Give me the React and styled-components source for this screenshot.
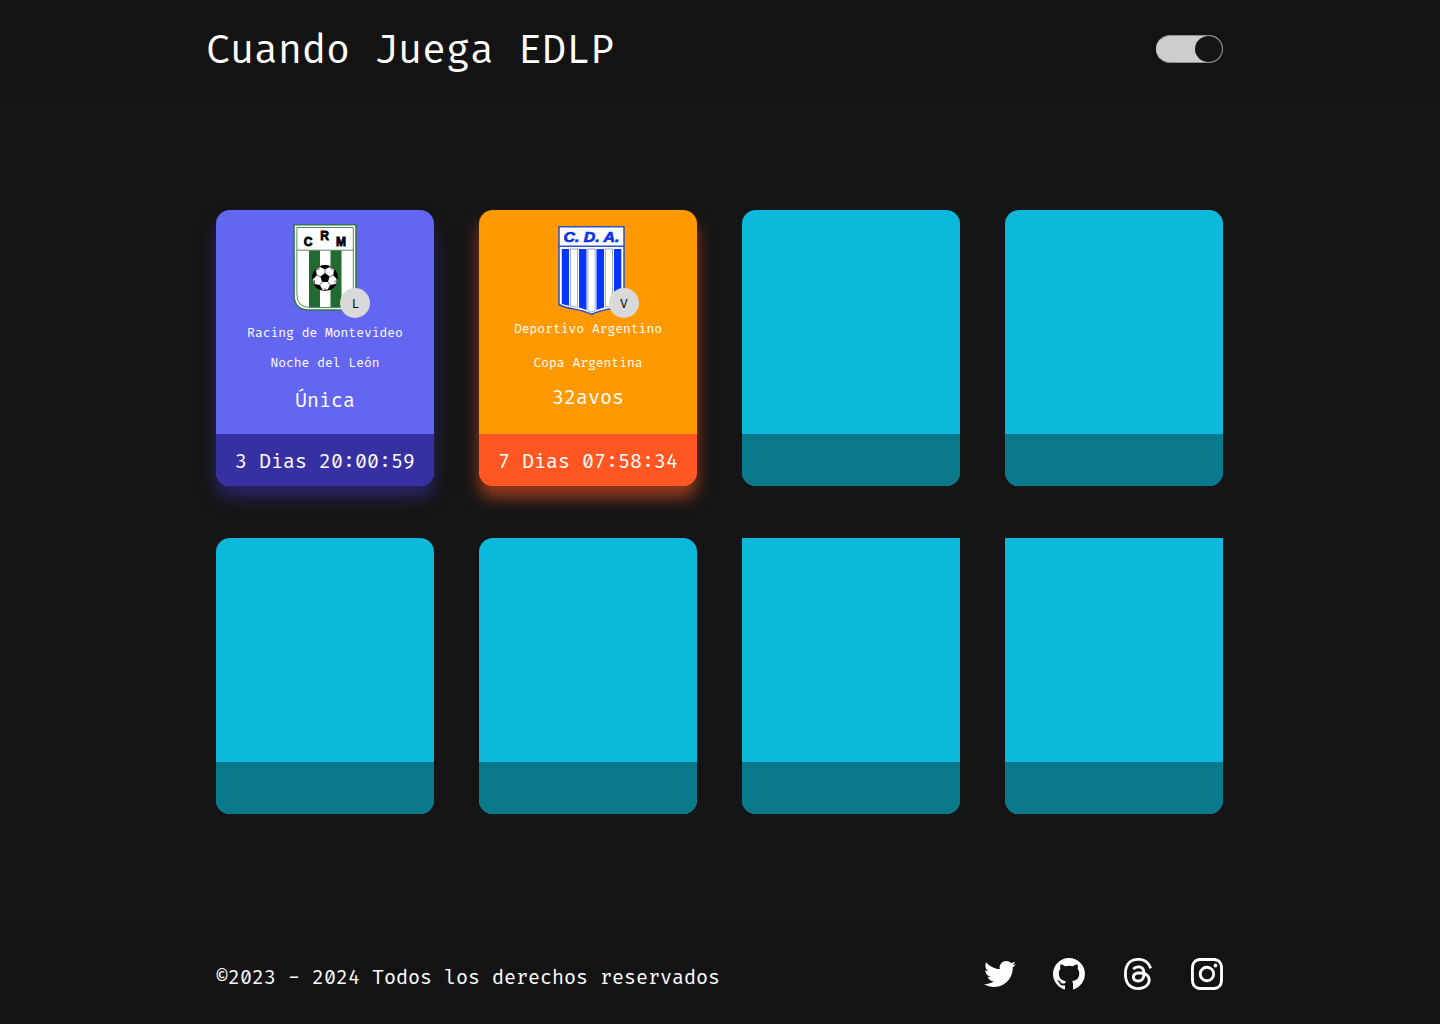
import React from "react";
import styled, { createGlobalStyle } from "styled-components";
import { BsGithub, BsThreads, BsInstagram } from "react-icons/bs";
import { FaTwitter } from "react-icons/fa";

const GlobalStyle = createGlobalStyle`
  *, *::before, *::after { box-sizing: border-box; }
  body {
    margin: 0;
    background: #151515;
    color: #fff;
    font-family: "Fira Code", "DejaVu Sans Mono", "Liberation Mono", monospace;
  }
`;

const Page = styled.div`
  min-height: 1024px;
  display: flex;
  flex-direction: column;
`;

const Bar = styled.header`
  height: 100px;
  padding: 0 217px 0 ${(p) => p.$left}px;
  background: #131313;
  display: flex;
  justify-content: space-between;
`;

const Title = styled.h1`
  margin: 27px 0 0;
  font-size: 39px;
  line-height: 48px;
  font-weight: 400;
  white-space: nowrap;
`;

const Toggle = styled.button`
  width: 67px;
  height: 28px;
  margin-top: 35px;
  padding: 0;
  border: 1px solid #909090;
  border-left-color: #cdcdcd;
  border-radius: 14px;
  background: #cdcdcd;
  display: flex;
  justify-content: flex-end;
`;

const Knob = styled.span`
  width: 27px;
  height: 26px;
  border-radius: 50%;
  background: #151515;
`;

const Main = styled.main`
  flex: 1;
  padding: 110px 217px 110px 216px;
`;

const Grid = styled.section`
  display: grid;
  grid-template-columns: repeat(4, 218px);
  grid-auto-rows: 276px;
  gap: 52px 45px;
`;

const Card = styled.article`
  display: flex;
  flex-direction: column;
  overflow: hidden;
  border-radius: ${(p) => (p.$square ? "0 0 14px 14px" : "14px")};
  background: ${(p) => p.$color};
  box-shadow: ${(p) => (p.$glow ? `0 12px 16px ${p.$glow}` : "none")};
`;

const Body = styled.div`
  height: 224px;
  display: flex;
  flex-direction: column;
  align-items: center;
`;

const Crest = styled.div`
  position: relative;
  width: 66px;
  height: 92px;
  margin: 14px ${(p) => p.$nudge}px 0 0;

  svg { display: block; }
`;

const Venue = styled.span`
  position: absolute;
  top: 64px;
  left: ${(p) => p.$left}px;
  width: 30px;
  height: 30px;
  border-radius: 50%;
  background: #d9d9d9;
  color: #000;
  font-size: 12.675px;
  line-height: 32px;
  text-align: center;
  text-indent: ${(p) => p.$indent || 0}px;
`;

const Line = styled.p`
  margin: ${(p) => p.$top}px 0 0;
  font-size: 12.675px;
  line-height: 16px;
  white-space: nowrap;
`;

const Round = styled.p`
  margin: ${(p) => p.$top}px 0 0;
  font-size: 19.5px;
  line-height: 24px;
`;

const Countdown = styled.footer`
  height: 52px;
  padding-top: 16px;
  background: ${(p) => p.$color};
  font-size: 19.5px;
  line-height: 24px;
  text-align: center;
  white-space: nowrap;
`;

const Copyright = styled.p`
  margin: 42px 0 0;
  font-size: 19.5px;
  line-height: 24px;
  white-space: nowrap;
`;

const Social = styled.nav`
  display: flex;
  gap: 37px;
  margin-top: 34px;
  height: 32px;

  a { display: block; height: 32px; color: #fff; }
  svg { display: block; width: 32px; height: 32px; }
`;

const GithubMark = () => (
  <svg viewBox="0 0 32 32" fill="currentColor">
    <BsGithub width="32" height="32" />
    <path d="M9.8 30L12 30V31.6L9.8 30.8ZM20 30L22.2 30V30.8L20 31.6Z" />
  </svg>
);

const RacingCrest = () => (
  <svg width="66" height="90" viewBox="0 0 66 90">
    <path d="M2 .8H64V86H17Q2 86 2 71Z" fill="#fff" stroke="#35764a" strokeWidth="1.6" />
    <path d="M4.9 3.5H61.3V83.5H18Q4.9 83.5 4.9 70Z" fill="none" stroke="#568965" strokeWidth="1" />
    <path d="M4.9 26.2H61.3" stroke="#568965" strokeWidth="1" />
    <path d="M17 26.5H28V83H17ZM38.5 26.5H49.5V83H38.5Z" fill="#226b32" />
    <g fill="#000" stroke="#000" strokeWidth=".8" fontFamily="Liberation Sans, Arial, sans-serif" fontWeight="700" fontSize="12" textAnchor="middle">
      <text x="16" y="22.2">C</text>
      <text x="32.7" y="15.8">R</text>
      <text x="49" y="22.2">M</text>
    </g>
    <clipPath id="ball"><circle r="13" /></clipPath>
    <g transform="translate(33 54)" clipPath="url(#ball)">
      <circle r="12.6" fill="#fff" stroke="#222" strokeWidth="1" />
      <path d="M0 -4.9L4.7 -1.5 2.9 4H-2.9L-4.7 -1.5Z" fill="#050505" />
      {[0, 72, 144, 216, 288].map((turn) => (
        <g key={turn} transform={`rotate(${turn})`}>
          <path d="M0 -8.6L4.8 -11 4.4 -14H-4.4L-4.8 -11Z" fill="#050505" />
          <path d="M0 -4.5V-9.5M4.6 -11.5L7.3 -7.6" stroke="#444" strokeWidth=".7" />
        </g>
      ))}
    </g>
  </svg>
);

const ArgentinoCrest = () => (
  <svg width="68" height="92" viewBox="0 0 68 92">
    <path d="M1 2.8H66V80.5C57 86 45 84 33.5 90.5C22 84 10 86 1 80.5Z" fill="#fff" stroke="#3050c8" strokeWidth="1.5" />
    <path d="M1 22.2H66" stroke="#3050c8" strokeWidth="1.5" />
    <path d="M3.8 25H11V81.8L3.8 80ZM21 25H28.5V86L21 83.6ZM38.5 25H46V83.6L38.5 86ZM56 25H63.3V80L56 81.8Z" fill="#0636ff" />
    <path d="M12.5 25H19.5V83.3L12.5 82ZM29.8 25H37.2V86.5L33.5 88.3 29.8 86.5ZM47.4 25H54.5V82L47.4 83.3Z" fill="#fff" stroke="#8795bf" strokeWidth=".8" />
    <text x="33.4" y="18" fill="#0834e8" stroke="#0834e8" strokeWidth=".7" fontFamily="Liberation Sans, Arial, sans-serif" fontWeight="700" fontStyle="italic" fontSize="15" textAnchor="middle" textLength="56" lengthAdjust="spacingAndGlyphs">C. D. A.</text>
  </svg>
);

const matches = [
  {
    color: "#6366f1", footer: "#3730a3", glow: "rgba(55, 48, 163, 0.55)",
    crest: <RacingCrest />, nudge: 0, venue: "L", venueLeft: 48, venueIndent: 1,
    team: "Racing de Montevideo", teamTop: 9, cup: "Noche del León", cupTop: 14,
    round: "Única", roundTop: 18, time: "3 Dias 20:00:59",
  },
  {
    color: "#ff9900", footer: "#ff5722", glow: "rgba(255, 87, 34, 0.55)",
    crest: <ArgentinoCrest />, nudge: -6, venue: "V", venueLeft: 51,
    team: "Deportivo Argentino", teamTop: 5, cup: "Copa Argentina", cupTop: 18,
    round: "32avos", roundTop: 15, time: "7 Dias 07:58:34",
  },
  {}, {}, {}, {}, { square: true }, { square: true },
];

const links = [
  ["Twitter", FaTwitter], ["GitHub", GithubMark], ["Threads", BsThreads], ["Instagram", BsInstagram],
];

function MatchCard({ match }) {
  return (
    <Card $color={match.color || "#0cb9da"} $glow={match.glow} $square={match.square}>
      <Body>
        {match.team && (
          <>
            <Crest $nudge={match.nudge}>
              {match.crest}
              <Venue $left={match.venueLeft} $indent={match.venueIndent}>{match.venue}</Venue>
            </Crest>
            <Line $top={match.teamTop}>{match.team}</Line>
            <Line $top={match.cupTop}>{match.cup}</Line>
            <Round $top={match.roundTop}>{match.round}</Round>
          </>
        )}
      </Body>
      <Countdown $color={match.footer || "#0a788b"}>{match.time}</Countdown>
    </Card>
  );
}

export default function App() {
  return (
    <Page>
      <GlobalStyle />
      <Bar $left={206}>
        <Title>Cuando Juega EDLP</Title>
        <Toggle aria-label="Tema"><Knob /></Toggle>
      </Bar>
      <Main>
        <Grid>
          {matches.map((match, i) => <MatchCard key={i} match={match} />)}
        </Grid>
      </Main>
      <Bar as="footer" $left={216}>
        <Copyright>©2023 - 2024 Todos los derechos reservados</Copyright>
        <Social>
          {links.map(([name, Icon]) => <a key={name} href={"#" + name} aria-label={name}><Icon /></a>)}
        </Social>
      </Bar>
    </Page>
  );
}
